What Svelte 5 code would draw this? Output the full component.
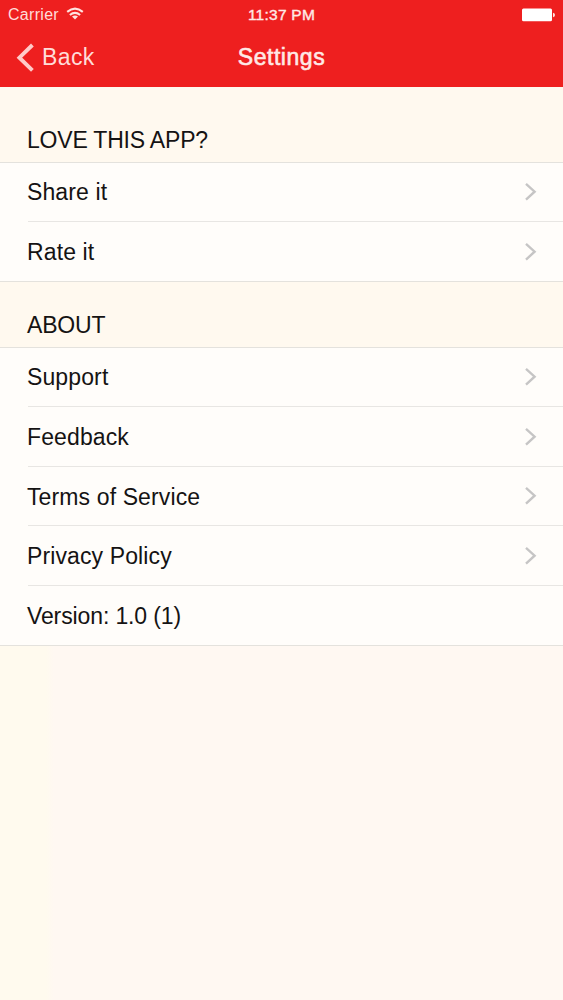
<script>
    const sections = [
        {
            title: 'LOVE THIS APP?',
            rows: [
                { label: 'Share it', link: true },
                { label: 'Rate it', link: true }
            ]
        },
        {
            title: 'ABOUT',
            rows: [
                { label: 'Support', link: true },
                { label: 'Feedback', link: true },
                { label: 'Terms of Service', link: true },
                { label: 'Privacy Policy', link: true },
                { label: 'Version: 1.0 (1)', link: false }
            ]
        }
    ];
</script>

<main class="screen">
    <header>
        <div class="status">
            <div class="carrier">
                <span>Carrier</span>
                <svg class="wifi" viewBox="0 0 18 13" width="18" height="13">
                    <g fill="none" stroke="#ffe3df" stroke-width="2.1">
                        <path d="M1.2 4.9 Q9 -1.6 16.8 4.9" />
                        <path d="M3.9 8 Q9 3.6 14.1 8" />
                    </g>
                    <path d="M6 9.6 Q9 7.2 12 9.6 L9 12.6 Z" fill="#ffe3df" />
                </svg>
            </div>
            <span class="time">11:37 PM</span>
            <svg class="battery" viewBox="0 0 34 14" width="34" height="14">
                <rect x="1" y="0.6" width="30" height="12.6" rx="1.5" fill="#fff" />
                <path d="M32 4.8 Q34 5.2 34 7 Q34 8.8 32 9.2 Z" fill="#ffe3df" />
            </svg>
        </div>
        <nav>
            <button type="button" class="back">
                <svg viewBox="0 0 18 30" width="18" height="30">
                    <path d="M16.4 2 L3.4 14.7 L16.4 27.4" fill="none" stroke="#ffcbc9" stroke-width="3.9" />
                </svg>
                <span>Back</span>
            </button>
            <h1>Settings</h1>
        </nav>
    </header>

    {#each sections as section}
        <section>
            <h2>{section.title}</h2>
            <ul>
                {#each section.rows as row}
                    <li>
                        <div class="row" class:plain={!row.link}>
                            <span>{row.label}</span>
                            {#if row.link}
                                <svg viewBox="0 0 12 20" width="12" height="20">
                                    <path d="M1 1.8 L9.6 9.7 L1 17.6" fill="none" stroke="#c6c5c5" stroke-width="2.4" />
                                </svg>
                            {/if}
                        </div>
                    </li>
                {/each}
            </ul>
        </section>
    {/each}
</main>

<style>
    :global(body) {
        margin: 0;
        background: #fff8f2;
    }

    .screen {
        min-height: 1000px;
        background: linear-gradient(to right, #fffaee 0, #fffaee 46px, #fff8f2 54px);
        font-family: 'Liberation Sans', Arial, sans-serif;
        color: #151313;
        overflow: hidden;
    }

    header {
        height: 87px;
        background: #ee1f1f;
        color: #ffe9e6;
    }

    .status {
        display: grid;
        grid-template-columns: 1fr auto 1fr;
        align-items: center;
        height: 28px;
        padding: 0 8px;
        font-size: 16px;
        line-height: 28px;
    }

    .carrier {
        display: flex;
        align-items: center;
        gap: 7px;
        padding-top: 1px;
        letter-spacing: 0.3px;
        color: #ffdcd9;
    }

    .wifi {
        margin-top: -3px;
    }

    .time {
        padding-top: 1px;
        font-size: 15.5px;
        letter-spacing: 0.25px;
        -webkit-text-stroke: 0.4px #ffe9e6;
    }

    .battery {
        justify-self: end;
    }

    nav {
        display: grid;
        grid-template-columns: 1fr auto 1fr;
        align-items: center;
        height: 59px;
        padding: 0 16px;
    }

    .back {
        display: flex;
        align-items: center;
        gap: 8px;
        padding: 0;
        border: 0;
        background: none;
        color: #ffdcd9;
        font: 23px 'Liberation Sans', Arial, sans-serif;
        letter-spacing: 0.4px;
    }

    h1 {
        margin: 0;
        font-size: 23px;
        font-weight: normal;
        letter-spacing: 0.55px;
        -webkit-text-stroke: 0.6px #ffe9e6;
    }

    h2 {
        box-sizing: border-box;
        height: 64.8px;
        margin: 0;
        padding: 30px 27px 0;
        font-size: 23px;
        font-weight: normal;
        line-height: 27px;
        letter-spacing: -0.2px;
        background: #fff9ef;
    }

    section:first-of-type h2 {
        height: 74.7px;
        padding-top: 40px;
    }

    ul {
        margin: 0;
        padding: 0;
        list-style: none;
        border-top: 1px solid #e4e2dd;
        border-bottom: 1px solid #e4e2dd;
        background: #fffdfa;
    }

    li {
        padding-left: 28px;
    }

    .row {
        display: flex;
        align-items: center;
        justify-content: space-between;
        box-sizing: border-box;
        height: 59.6px;
        padding-right: 26px;
        border-bottom: 1px solid #e8e6e3;
        font-size: 23px;
        letter-spacing: 0.12px;
    }

    .row span {
        margin-left: -1px;
        padding-top: 2px;
    }

    .plain {
        letter-spacing: -0.12px;
    }

    /* the list's own border closes the last row */
    li:last-child .row {
        height: 58.6px;
        border-bottom: 0;
    }
</style>
